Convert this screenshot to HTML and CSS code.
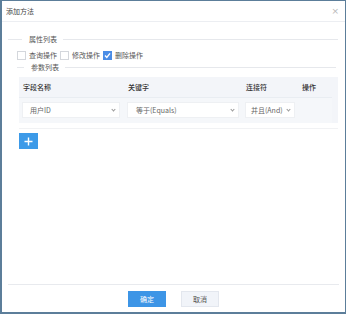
FILE: index.html
```html
<!DOCTYPE html>
<html lang="zh">
<head>
    <meta charset="UTF-8">
    <title>添加方法</title>
    <link rel="stylesheet" href="styles.css">
</head>
<body>
    <div class="dialog">
        <div class="header">
            <span class="title">添加方法</span>
            <span class="close">&times;</span>
        </div>
        <div class="content">
            <div class="legend legend-attr"><span>属性列表</span></div>
            <div class="checks">
                <label class="check"><span class="box"></span>查询操作</label>
                <label class="check"><span class="box"></span>修改操作</label>
                <label class="check"><span class="box checked">
                    <svg width="9" height="9" viewBox="0 0 9 9"><path d="M2 4.6 L3.8 6.5 L7 2.4" fill="none" stroke="#fff" stroke-width="1.4"/></svg>
                </span>删除操作</label>
            </div>
            <div class="legend legend-param"><span>参数列表</span></div>
            <div class="table">
                <div class="th">字段名称</div>
                <div class="th">关键字</div>
                <div class="th">连接符</div>
                <div class="th">操作</div>
                <div class="td"><div class="select s1">用户ID<span class="arrow"></span></div></div>
                <div class="td"><div class="select s2">等于(Equals)<span class="arrow"></span></div></div>
                <div class="td"><div class="select s3">并且(And)<span class="arrow"></span></div></div>
                <div class="td"></div>
            </div>
            <div class="divider"></div>
            <button class="add">
                <svg width="9" height="9" viewBox="0 0 9 9"><path d="M4.5 0.5 V8.5 M0.5 4.5 H8.5" stroke="#fff" stroke-width="1.4"/></svg>
            </button>
        </div>
        <div class="footer">
            <button class="btn primary">确定</button>
            <button class="btn">取消</button>
        </div>
    </div>
</body>
</html>
```

FILE: styles.css
```css
* {
    box-sizing: border-box;
}
body {
    margin: 0;
    font-family: "Noto Sans CJK SC", "Noto Sans", sans-serif;
    font-size: 7px;
    color: #333;
    background: #fff;
}
.dialog {
    width: 346px;
    height: 314px;
    border: 2px solid #5c7e9a;
    border-top-width: 1px;
    border-right-width: 1.5px;
    display: flex;
    flex-direction: column;
    background: #fff;
}
.header {
    height: 21px;
    display: flex;
    align-items: center;
    justify-content: space-between;
    padding: 0 6px 0 4px;
    border-bottom: 1px solid #eceef2;
    line-height: 1;
}
.title {
    color: #444;
}
.close {
    font-family: "DejaVu Sans", sans-serif;
    font-size: 9px;
    color: #b8b8b8;
}
.content {
    flex: 1;
    padding: 14px 7px 0 6px;
}
.legend {
    display: flex;
    align-items: center;
    color: #555;
    line-height: 1;
}
.legend::before,
.legend::after {
    content: "";
    border-top: 1px solid #e6e8ec;
}
.legend span {
    margin: 0 6px 0 7px;
}
.legend-attr::before {
    width: 14px;
}
.legend-attr::after {
    flex: 1;
}
.legend-param {
    margin: 4px 2px 0 9px;
}
.legend-param::before {
    width: 7px;
}
.legend-param::after {
    flex: 1;
}
.checks {
    display: flex;
    gap: 3px;
    margin: 8px 0 0 9px;
}
.check {
    display: flex;
    align-items: center;
    gap: 3px;
    color: #555;
    line-height: 9px;
}
.box {
    width: 9px;
    height: 9px;
    border: 1px solid #d4d7dc;
    background: #fff;
    display: flex;
    align-items: center;
    justify-content: center;
}
.box.checked {
    background: #4a8de6;
    border-color: #4a8de6;
}
.box svg {
    flex: none;
}
.table {
    display: grid;
    grid-template-columns: 105px 118px 56px 34px;
    margin: 6px 0 0 11px;
    background: #f3f5f9;
}
.th {
    height: 20px;
    padding: 0 4px;
    display: flex;
    align-items: center;
    color: #333;
    font-weight: 500;
}
.td {
    height: 26px;
    padding: 4px 3px 0;
    border-top: 1px solid #e9edf2;
    background: #f5f7fa;
}
.select {
    position: relative;
    height: 16px;
    background: #fff;
    border: 1px solid #eef0f3;
    color: #666;
    display: flex;
    align-items: center;
    padding-left: 7px;
}
.s1 {
    width: 98px;
}
.s2 {
    width: 112px;
    padding-left: 8px;
}
.s3 {
    width: 50px;
    padding-left: 5px;
}
.arrow {
    position: absolute;
    right: 4px;
    top: 5px;
    width: 3px;
    height: 3px;
    border-right: 1px solid #999;
    border-bottom: 1px solid #999;
    transform: rotate(45deg);
}
.divider {
    margin: 5px 0 0 11px;
    border-top: 1px solid #f1f2f4;
}
.add {
    margin: 4px 0 0 11px;
    width: 19px;
    height: 16px;
    border: none;
    background: #3c9ae8;
    display: flex;
    align-items: center;
    justify-content: center;
    padding: 0;
}
.footer {
    height: 27px;
    margin: 0 6px 1px 6px;
    border-top: 1px solid #e8eaee;
    display: flex;
    justify-content: center;
    gap: 15px;
    padding-top: 6px;
}
.btn {
    width: 38px;
    height: 16px;
    font-family: "Noto Sans CJK SC", sans-serif;
    font-size: 7px;
    border: 1px solid #e3e7ee;
    background: #f1f4f9;
    color: #555;
    padding: 0;
    margin-left: 0;
}
.btn.primary {
    background: #3d95e6;
    border-color: #3d95e6;
    color: #fff;
}
```
